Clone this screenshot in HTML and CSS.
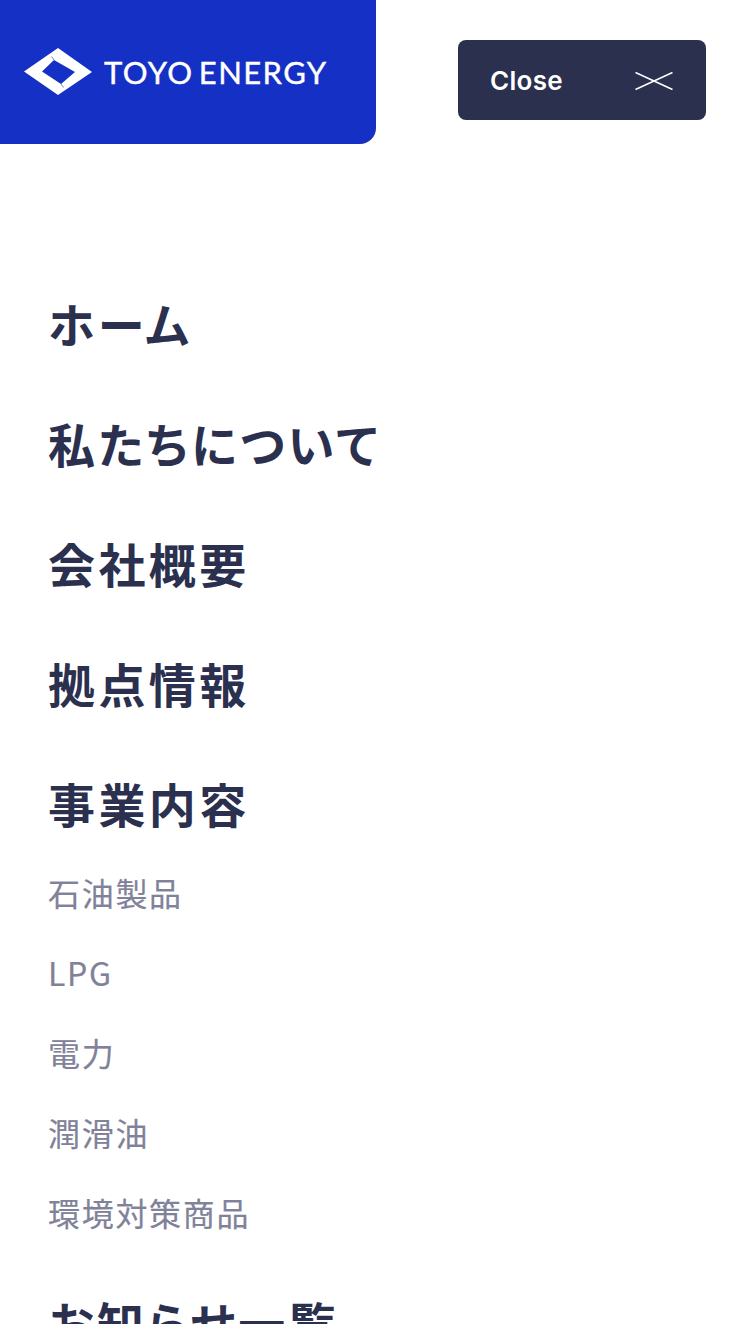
FILE: index.html
```html
<!DOCTYPE html>
<html lang="ja">
<head>
    <meta charset="UTF-8">
    <meta name="viewport" content="width=device-width, initial-scale=1.0">
    <title>TOYO ENERGY</title>
    <link rel="stylesheet" href="styles.css">
</head>
<body>
    <header class="top">
        <a class="logo" href="#">
            <svg class="logo-mark" viewBox="0 0 68 48" aria-hidden="true">
                <path fill="#fff" fill-rule="evenodd" d="M34 0L68 24L34 47L0 23.500ZM30 12L18 23.500L37 36L51 24Z"/>
                <path stroke="#1530c4" stroke-width="0.600" fill="none" d="M30 12L27.500 8.500M37 36L39.500 39.500"/>
            </svg>
            <span class="logo-text">TOYO ENERGY</span>
        </a>
        <button class="close">
            <span>Close</span>
            <svg class="close-icon" viewBox="0 0 38 20" aria-hidden="true">
                <path d="M0.500 1.500L37.500 18.500M37.500 1.500L0.500 18.500" stroke="#fff" stroke-width="1.500" fill="none"/>
            </svg>
        </button>
    </header>

    <nav class="menu">
        <a class="main-link" href="#">ホーム</a>
        <a class="main-link" href="#">私たちについて</a>
        <a class="main-link" href="#">会社概要</a>
        <a class="main-link" href="#">拠点情報</a>
        <a class="main-link" href="#">事業内容</a>
        <div class="sub">
            <a href="#">石油製品</a>
            <a href="#">LPG</a>
            <a href="#">電力</a>
            <a href="#">潤滑油</a>
            <a href="#">環境対策商品</a>
        </div>
        <a class="main-link" href="#">お知らせ一覧</a>
    </nav>
</body>
</html>
```

FILE: styles.css
```css
html, body {
    margin: 0;
    height: 1324px;
    overflow: hidden;
}

body {
    background-color: #fff;
    color: #2b304f;
    font-family: "Noto Sans CJK JP", "Noto Sans", sans-serif;
}

a {
    text-decoration: none;
    color: inherit;
}

.top {
    display: flex;
    justify-content: space-between;
    align-items: flex-start;
    padding-right: 48px;
}

.logo {
    display: flex;
    align-items: center;
    gap: 12px;
    width: 376px;
    height: 144px;
    box-sizing: border-box;
    padding-left: 24px;
    background-color: #1530c4;
    border-bottom-right-radius: 16px;
}

.logo-mark {
    width: 68px;
    height: 48px;
}

.logo-text {
    color: #fff;
    font-family: "Lato", sans-serif;
    font-size: 31px;
    letter-spacing: 1.4px;
    word-spacing: -4px;
    -webkit-text-stroke: 0.4px #fff;
}

.close {
    display: flex;
    justify-content: space-between;
    align-items: center;
    width: 248px;
    height: 80px;
    margin-top: 40px;
    padding: 1px 32px 0;
    background-color: #2b304f;
    color: #fff;
    border: 0;
    border-radius: 8px;
    font-family: "Inter", sans-serif;
    font-size: 26px;
    font-weight: 600;
    letter-spacing: 0.3px;
}

.close-icon {
    width: 38px;
    height: 20px;
    margin-right: 1px;
}

.menu {
    display: flex;
    flex-direction: column;
    align-items: flex-start;
    padding: 124px 48px 0;
}

.main-link {
    height: 120px;
    line-height: 110px;
    font-size: 47px;
    font-weight: 700;
    letter-spacing: 3.4px;
    font-feature-settings: "palt";
}

.sub {
    display: flex;
    flex-direction: column;
    margin-top: -16px;
    margin-bottom: 15px;
}

.sub a {
    height: 80px;
    line-height: 80px;
    font-size: 32px;
    font-weight: 400;
    letter-spacing: 1.7px;
    color: #7f8299;
    -webkit-text-stroke: 0.2px #7f8299;
}
```
